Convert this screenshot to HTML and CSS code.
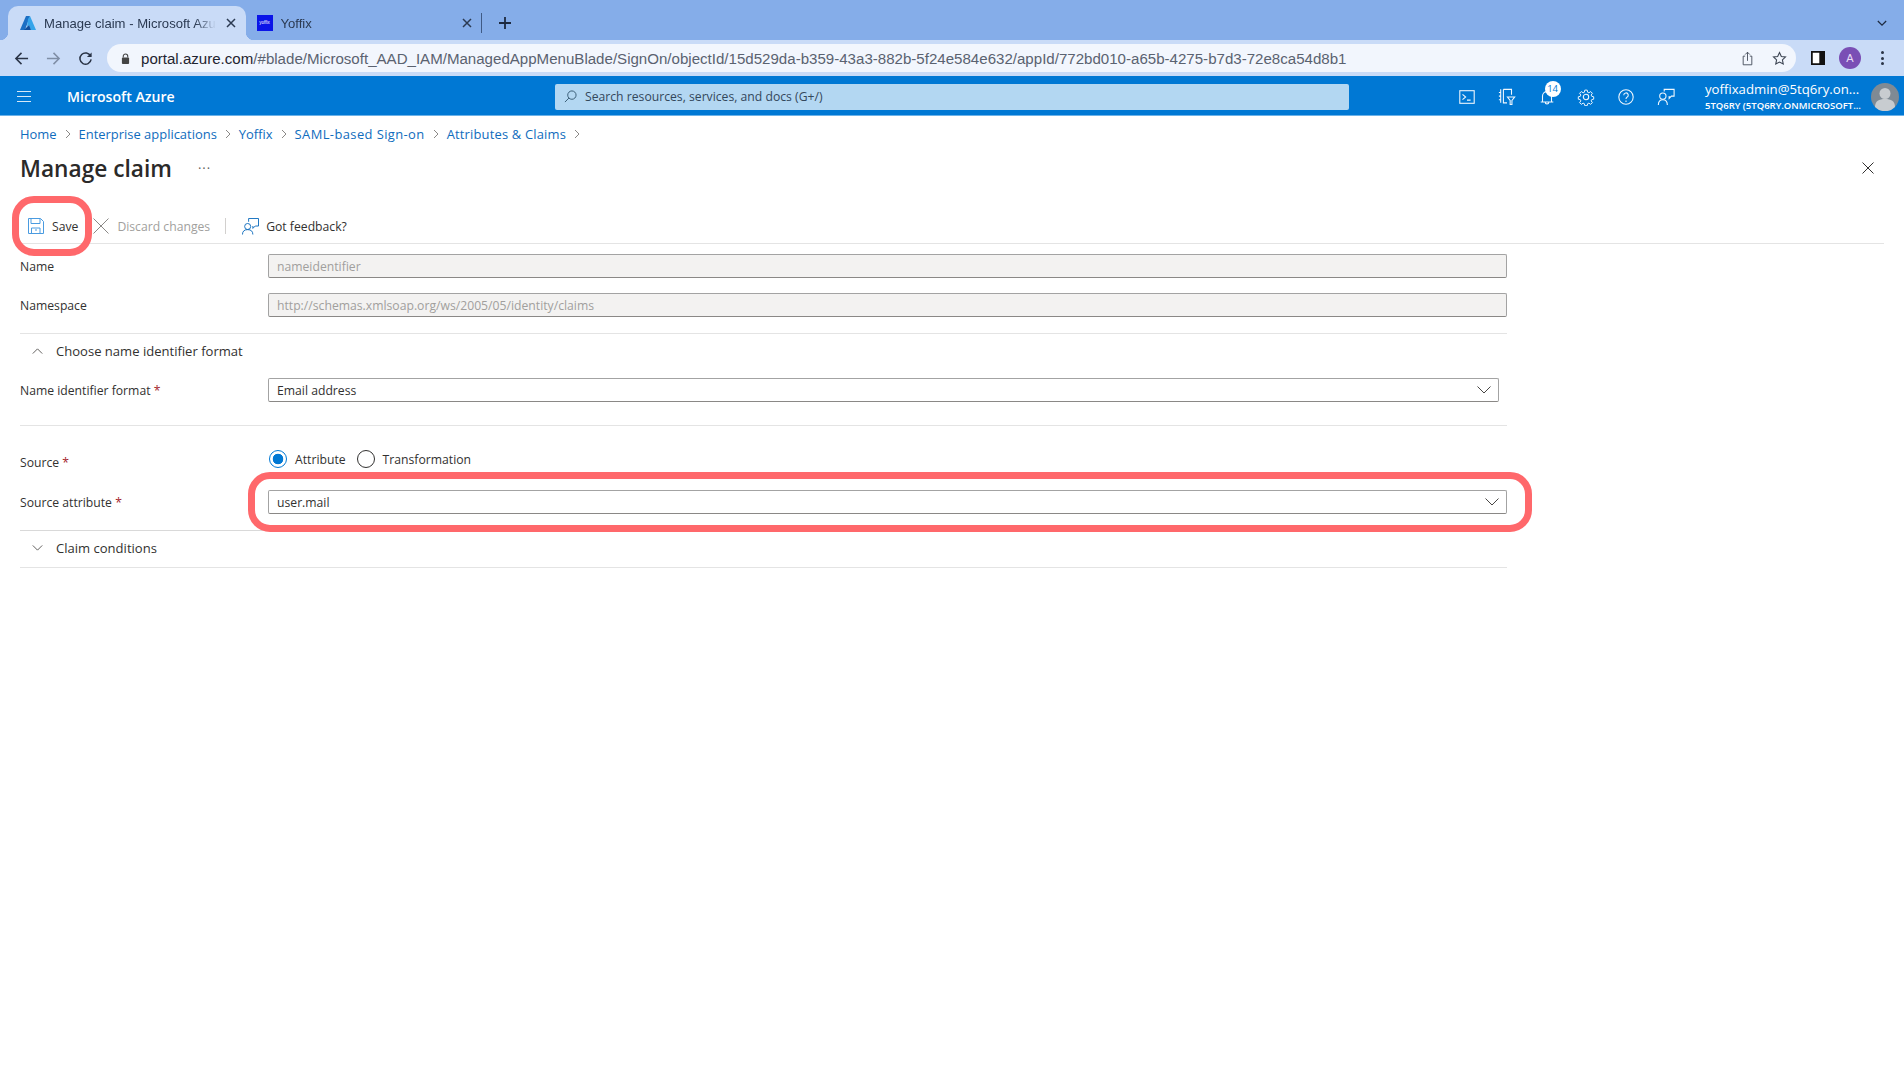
FILE: index.html
```html
<!DOCTYPE html>
<html lang="en">
<head>
<meta charset="utf-8">
<title>Manage claim - Microsoft Azure</title>
<link rel="stylesheet" href="styles.css">
</head>
<body>
<div class="tabstrip">
  <div class="tab tab-active">
    <svg class="favicon" viewBox="0 0 16 16"><path d="M6 1h4L5 15H0z" fill="#1c6fc4"/><path d="M10 1l6 14h-5L8.500 10 7 12l1-8z" fill="#35a4ea"/><path d="M4 15l5-5 2 5z" fill="#0f4f9e"/></svg>
    <span class="tab-title">Manage claim - Microsoft Azure</span>
    <svg class="tab-x" viewBox="0 0 10 10"><path d="M1 1l8 8M9 1l-8 8"/></svg>
  </div>
  <div class="tab tab-second">
    <span class="yoffix">yoffix</span>
    <span class="tab-title">Yoffix</span>
    <svg class="tab-x" viewBox="0 0 10 10"><path d="M1 1l8 8M9 1l-8 8"/></svg>
  </div>
  <span class="tab-sep"></span>
  <svg class="tab-plus" viewBox="0 0 12 12"><path d="M6 0v12M0 6h12"/></svg>
  <svg class="tab-menu" viewBox="0 0 12 8"><path d="M1 1l5 5 5-5"/></svg>
</div>
<div class="toolbar">
  <svg class="tb-ic" viewBox="0 0 16 16"><path d="M15 8H2M8 2L2 8l6 6"/></svg>
  <svg class="tb-ic tb-dim" viewBox="0 0 16 16"><path d="M1 8h13M8 2l6 6-6 6"/></svg>
  <svg class="tb-ic" viewBox="0 0 16 16"><path d="M13.500 5.500A6 6 0 1 0 14 9"/><path class="tb-fill" d="M14.500 1.500v5h-5z"/></svg>
  <div class="omnibox">
    <svg class="lock" viewBox="0 0 10 12"><path d="M2.500 5V3.500a2.500 2.500 0 0 1 5 0V5" fill="none" stroke="#444" stroke-width="1.200"/><rect x="1" y="5" width="8" height="7" rx="1" fill="#444"/></svg>
    <span class="url"><b>portal.azure.com</b>/#blade/Microsoft_AAD_IAM/ManagedAppMenuBlade/SignOn/objectId/15d529da-b359-43a3-882b-5f24e584e632/appId/772bd010-a65b-4275-b7d3-72e8ca54d8b1</span>
    <svg class="omni-ic share" viewBox="0 0 14 18"><path d="M4 6H1.500v11h11V6H10M7 12V1M4 4l3-3 3 3"/></svg>
    <svg class="omni-ic star" viewBox="0 0 18 18"><path d="M9 1.800l2.200 4.700 5 .6-3.700 3.500 1 5.100L9 13.200l-4.500 2.500 1-5.100L1.800 7.100l5-.6z"/></svg>
  </div>
  <svg class="panel" viewBox="0 0 16 16"><path d="M1 1h14v14H1z" fill="#fff" stroke="#111" stroke-width="2"/><path d="M9.500 1H15v14H9.500z" fill="#111"/></svg>
  <span class="profile">A</span>
  <span class="kebab"><i></i><i></i><i></i></span>
</div>
<header class="nav">
  <svg class="burger" viewBox="0 0 14 11"><path d="M0 .5h14M0 5.500h14M0 10.500h14"/></svg>
  <span class="brand">Microsoft Azure</span>
  <div class="search">
    <svg class="search-ic" viewBox="0 0 14 14"><circle cx="8.500" cy="5.500" r="4.500"/><path d="M5.300 8.700L1 13"/></svg>
    <span>Search resources, services, and docs (G+/)</span>
  </div>
  <div class="nav-icons">
    <svg class="nav-ic" viewBox="0 0 20 20"><rect x="2" y="3" width="16" height="14"/><path d="M5 7l3.500 3L5 13M10 13.500h4"/></svg>
    <svg class="nav-ic" viewBox="0 0 20 20"><path d="M3 1.500v15M6 1.500h9v6M6 1.500v15h4M1 5h2M1 9h2M1 13h2M10.500 10h8l-3 3.800v4.500h-2v-4.500z"/></svg>
    <span class="bell-wrap">
      <svg class="nav-ic" viewBox="0 0 20 20"><path d="M3 15.500h14M5 15.500V9a5 5 0 0 1 10 0v6.500M8 15.500c0 3 4 3 4 0"/></svg>
      <span class="badge">14</span>
    </span>
    <svg class="nav-ic" viewBox="0 0 20 20"><circle cx="10" cy="10" r="3"/><path d="M8.500 1.500h3l.5 2.600 1.600.7 2.200-1.500 2.100 2.100-1.500 2.200.7 1.600 2.400.5v3l-2.400.5-.7 1.600 1.500 2.200-2.100 2.100-2.200-1.500-1.600.7-.5 2.400h-3l-.5-2.400-1.600-.7-2.200 1.500-2.100-2.100 1.500-2.200-.7-1.600-2.400-.5v-3l2.400-.5.700-1.600-1.500-2.200 2.100-2.100 2.200 1.500 1.600-.7z" transform="translate(1 1) scale(.9)"/></svg>
    <svg class="nav-ic" viewBox="0 0 20 20"><circle cx="10" cy="10" r="8"/><path d="M7.500 8a2.500 2.500 0 1 1 3.600 2.200c-.8.500-1.100 1-1.100 2"/><path d="M10 14v1.500"/></svg>
    <svg class="nav-ic" viewBox="0 0 20 20"><path d="M8 4V1.500h11V9h-3l-2.500 2.500V9M1.500 19c0-4 2-6 5-6s5 2 5 6"/><circle cx="6.500" cy="9" r="3.500"/></svg>
  </div>
  <div class="account">
    <span class="acc-name">yoffixadmin@5tq6ry.on...</span>
    <span class="acc-org">5TQ6RY (5TQ6RY.ONMICROSOFT...</span>
  </div>
  <svg class="avatar" viewBox="0 0 28 28"><circle cx="14" cy="14" r="14" fill="#7f8a94"/><circle cx="14" cy="10.500" r="5.500" fill="#c8ccd0"/><path d="M4 24c0-6 4-8 10-8s10 2 10 8a14 14 0 0 1-20 0z" fill="#c8ccd0"/></svg>
</header>
<main class="page">
  <nav class="crumbs">
    <a>Home</a><svg viewBox="0 0 6 10"><path d="M1 1l4 4-4 4"/></svg>
    <a>Enterprise applications</a><svg viewBox="0 0 6 10"><path d="M1 1l4 4-4 4"/></svg>
    <a>Yoffix</a><svg viewBox="0 0 6 10"><path d="M1 1l4 4-4 4"/></svg>
    <a class="crumb-saml">SAML-based Sign-on</a><svg viewBox="0 0 6 10"><path d="M1 1l4 4-4 4"/></svg>
    <a class="crumb-attr">Attributes &amp; Claims</a><svg viewBox="0 0 6 10"><path d="M1 1l4 4-4 4"/></svg>
  </nav>
  <div class="titlebar">
    <h1>Manage claim</h1>
    <span class="more">···</span>
    <svg class="close" viewBox="0 0 12 12"><path d="M.5.500l11 11M11.500.500l-11 11"/></svg>
  </div>
  <div class="cmdbar">
    <button class="cmd cmd-save">
      <svg class="cmd-ic" viewBox="0 0 16 16"><path d="M.5.500h12l3 3v12H.5z" fill="none" stroke="#4a9be0"/><path d="M3 .5v5h9v-5M3.500 15.500V10h8.500v5.500M7 12h2" fill="none" stroke="#4a9be0"/></svg>
      <span>Save</span>
    </button>
    <button class="cmd cmd-off">
      <svg class="cmd-x" viewBox="0 0 16 16"><path d="M.5.500l15 15M15.500.500l-15 15"/></svg>
      <span>Discard changes</span>
    </button>
    <span class="cmd-sep"></span>
    <button class="cmd cmd-fb">
      <svg class="cmd-ic" viewBox="0 0 18 18"><path d="M7 4V.5h10.500v8H14l-2.500 2.500V8.500" fill="none" stroke="#0f6cbd"/><circle cx="6" cy="9" r="3.200" fill="none" stroke="#0f6cbd"/><path d="M.5 17.500c0-3.500 2-5.200 5.500-5.200s5.500 1.700 5.500 5.200" fill="none" stroke="#0f6cbd"/></svg>
      <span>Got feedback?</span>
    </button>
  </div>
  <form class="form">
    <div class="row">
      <label>Name</label>
      <div class="input input-off">nameidentifier</div>
    </div>
    <div class="row row-ns">
      <label>Namespace</label>
      <div class="input input-off">http://schemas.xmlsoap.org/ws/2005/05/identity/claims</div>
    </div>
    <div class="section section-first">
      <svg class="sec-chev" viewBox="0 0 12 7"><path d="M.5 6.500L6 1l5.500 5.500"/></svg>
      <span>Choose name identifier format</span>
    </div>
    <div class="row row-fmt">
      <label>Name identifier format <em>*</em></label>
      <div class="input input-short">Email address
        <svg class="sel-chev" viewBox="0 0 14 8"><path d="M.5.500L7 7 13.500.500"/></svg>
      </div>
    </div>
    <div class="row row-src">
      <label>Source <em>*</em></label>
      <div class="radios">
        <span class="radio radio-on"></span><span class="radio-l">Attribute</span>
        <span class="radio"></span><span class="radio-l">Transformation</span>
      </div>
    </div>
    <div class="row row-attr">
      <label>Source attribute <em>*</em></label>
      <div class="input">user.mail
        <svg class="sel-chev" viewBox="0 0 14 8"><path d="M.5.500L7 7 13.500.500"/></svg>
      </div>
    </div>
    <div class="section section-last">
      <svg class="sec-chev" viewBox="0 0 12 7"><path d="M.5.500L6 6l5.500-5.500"/></svg>
      <span>Claim conditions</span>
    </div>
  </form>
  <span class="mark mark-save"></span>
  <span class="mark mark-attr"></span>
</main>
</body>
</html>
```
FILE: styles.css
```css
* { box-sizing: border-box; }
html, body { margin: 0; height: 100%; background: #fff; overflow: hidden; }
body { font-family: "Open Sans", "Noto Sans", sans-serif; color: #323130; }
button { font: inherit; background: none; border: 0; padding: 0; color: inherit; }

/* Browser tab strip */
.tabstrip { display: flex; align-items: flex-end; height: 40px; padding-left: 8px; background: #85ade9; font: 13.100px "Liberation Sans", sans-serif; color: #2b3a52; }
.tab { display: flex; align-items: center; width: 238px; height: 34px; padding: 0 0 0 12px; border-radius: 10px 10px 0 0; position: relative; }
.tab-active { background: #c9dbf7; }
.tab-active::before, .tab-active::after { content: ""; position: absolute; bottom: 0; width: 8px; height: 8px; }
.tab-active::before { left: -8px; background: radial-gradient(circle at 0 0, transparent 8px, #c9dbf7 8.500px); }
.tab-active::after { right: -8px; background: radial-gradient(circle at 100% 0, transparent 8px, #c9dbf7 8.500px); }
.tab-second { margin-left: -1.500px; }
.favicon { width: 16px; height: 16px; flex: none; margin-right: 8px; }
.yoffix { flex: none; width: 16px; height: 16px; margin-right: 8px; background: #0a14e8; color: #fff; font-size: 4.500px; line-height: 16px; text-align: center; }
.tab-title { width: 172px; flex: none; white-space: nowrap; overflow: hidden; -webkit-mask-image: linear-gradient(90deg, #000 88%, transparent); mask-image: linear-gradient(90deg, #000 88%, transparent); }
.tab-x { width: 10px; height: 10px; flex: none; margin-left: 10px; fill: none; stroke: #2b3a52; stroke-width: 1.500; }
.tab-second .tab-x { margin-left: 9px; }
.tab-sep { width: 1px; height: 20px; margin: 0 0 7px -2px; background: #3f5a85; }
.tab-plus { width: 12px; height: 12px; margin: 0 0 11px 17px; fill: none; stroke: #1d2a40; stroke-width: 1.800; }
.tab-menu { width: 10px; height: 7px; margin: 0 17px 13px auto; fill: none; stroke: #1d2a40; stroke-width: 1.500; }

/* Browser toolbar */
.toolbar { display: flex; align-items: center; height: 36px; padding: 0 0 0 14px; background: #c9dbf7; }
.tb-ic { width: 15px; height: 15px; flex: none; margin-right: 17px; fill: none; stroke: #2a3446; stroke-width: 1.600; }
.tb-dim { stroke: #7f8ea6; }
.tb-fill { fill: #2a3446; stroke: none; }
.omnibox { display: flex; align-items: center; width: 1689px; height: 28px; margin-left: -3px; padding-left: 14px; border-radius: 14px; background: #f2f6fd; font: 15.080px "Liberation Sans", sans-serif; color: #5a6270; }
.omnibox b { font-weight: 400; color: #1f2430; }
.lock { width: 9px; height: 11px; flex: none; margin-right: 11px; }
.url { flex: 1; white-space: nowrap; }
.omni-ic { flex: none; fill: none; stroke: #3c4452; stroke-width: 1.100; }
.share { width: 11px; height: 15px; margin-right: 19px; }
.star { width: 15px; height: 15px; margin-right: 9px; stroke-width: 1.300; }
.panel { width: 14px; height: 14px; flex: none; margin-left: 15px; }
.profile { display: flex; align-items: center; justify-content: center; width: 22px; height: 22px; flex: none; margin-left: 14px; border-radius: 50%; background: #7a4fb5; color: #e8dcf5; font: 11px "Liberation Sans", sans-serif; }
.kebab { display: flex; flex-direction: column; gap: 2.500px; margin-left: 20px; }
.kebab i { width: 3px; height: 3px; border-radius: 50%; background: #2a3446; }

/* Portal header */
.nav { display: flex; align-items: center; height: 40px; padding: 2px 0 0 17px; background: #0078d4; border-bottom: 1px solid #6cb2e8; color: #fff; }
.burger { width: 14px; height: 11px; flex: none; fill: none; stroke: #d5e9f8; stroke-width: 1; }
.brand { width: 488px; margin-left: 36px; flex: none; font-size: 14.100px; font-weight: 600; white-space: nowrap; }
.search { display: flex; align-items: center; width: 794px; height: 26px; flex: none; padding-left: 9px; border-radius: 2px; background: #b3d7f2; font-size: 12.200px; color: #33475b; }
.search-ic { width: 13px; height: 13px; margin-right: 8px; fill: none; stroke: #33566f; stroke-width: 1; }
.nav-icons { display: flex; align-items: center; gap: 21.800px; margin-left: 109px; }
.nav-ic { width: 18px; height: 18px; flex: none; display: block; fill: none; stroke: #f0f7fd; stroke-width: 1.200; }
.bell-wrap { position: relative; display: block; }
.badge { position: absolute; top: -7px; left: 7px; width: 16px; height: 16px; border-radius: 50%; background: #fff; color: #0078d4; font-size: 9.500px; line-height: 16px; text-align: center; }
.account { display: flex; flex-direction: column; width: 166px; margin-left: 30px; flex: none; white-space: nowrap; }
.acc-name { font-size: 13.200px; line-height: 17px; }
.acc-org { font-size: 9.500px; font-weight: 600; line-height: 13px; margin-top: 1px; }
.avatar { width: 28px; height: 28px; flex: none; margin-left: 0; }

/* Page */
.page { position: relative; padding: 0 20px; }
.crumbs { display: flex; align-items: center; height: 36px; margin-bottom: 1px; font-size: 12.950px; color: #0f6cbd; white-space: nowrap; }
.crumbs svg { width: 6px; height: 10px; flex: none; margin: 0 8px; fill: none; stroke: #8a8886; stroke-width: 1; }
.crumb-saml { letter-spacing: .4px; }
.crumb-attr { letter-spacing: .18px; }
.titlebar { display: flex; align-items: center; height: 30px; }
h1 { margin: 0; font-size: 22.700px; font-weight: 600; color: #2b2a29; white-space: nowrap; }
.more { margin-left: 26px; font-size: 13px; letter-spacing: 1px; color: #605e5c; }
.close { width: 12px; height: 12px; margin-left: auto; margin-right: 10px; fill: none; stroke: #323130; stroke-width: 1; }

.cmdbar { display: flex; align-items: center; height: 61px; padding-top: 26px; border-bottom: 1px solid #e4e4e4; font-size: 12.200px; }
.cmd { display: flex; align-items: center; white-space: nowrap; color: #323130; }
.cmd-save { margin-left: 8px; }
.cmd-save .cmd-ic { width: 16px; height: 16px; margin-right: 8px; }
.cmd-off { margin-left: 15px; color: #a19f9d; }
.cmd-x { width: 16px; height: 16px; margin-right: 8px; fill: none; stroke: #8a8886; stroke-width: 1; }
.cmd-sep { width: 1px; height: 16px; margin-left: 15px; background: #d2d0ce; }
.cmd-fb { margin-left: 16px; }
.cmd-fb .cmd-ic { width: 17px; height: 17px; margin-right: 7px; }

.form { width: 1487px; padding-top: 10px; font-size: 12.200px; }
.row { display: flex; align-items: center; }
.row label { width: 248px; flex: none; color: #323130; white-space: nowrap; }
.row em { font-style: normal; color: #a4262c; }
.input { position: relative; display: flex; align-items: center; flex: 1; height: 24px; padding-left: 8px; border: 1px solid #a3a3a3; border-radius: 2px; border-bottom-color: #8a8886; background: #fff; color: #323130; white-space: nowrap; }
.input-off { background: #f3f2f1; color: #a19f9d; }
.input-short { flex: none; width: 1231px; }
.row-ns { margin-top: 15px; padding-bottom: 16px; border-bottom: 1px solid #e4e4e4; }
.section { display: flex; align-items: center; padding-left: 12px; font-size: 13.060px; color: #323130; }
.section-first { height: 34px; }
.sec-chev { width: 11px; height: 6px; flex: none; margin-right: 13px; fill: none; stroke: #484644; stroke-width: 1; }
.sel-chev { position: absolute; right: 7px; top: 7px; width: 14px; height: 8px; fill: none; stroke: #484644; stroke-width: 1; }
.row-fmt { margin-top: 10px; padding-bottom: 23px; border-bottom: 1px solid #e4e4e4; }
.row-src { margin-top: 21px; align-items: flex-start; height: 24px; }
.row-src label { padding-top: 7px; }
.radios { display: flex; align-items: center; height: 24px; }
.radio { width: 18px; height: 18px; flex: none; margin-left: 1px; border: 1px solid #323130; border-radius: 50%; background: #fff; }
.radio-on { border-color: #0078d4; background: radial-gradient(circle, #0078d4 0 5px, #fff 5.600px); }
.radio-l { margin-left: 8px; margin-right: 10px; }
.row-attr { margin-top: 19px; padding-bottom: 16px; border-bottom: 1px solid #d9d9d9; }
.section-last { height: 37px; padding-bottom: 2px; border-bottom: 1px solid #e4e4e4; }

/* Red highlights drawn over the screenshot */
.mark { position: absolute; border: 7.500px solid #ff686b; pointer-events: none; }
.mark-save { left: 12px; top: 80px; width: 80px; height: 60px; border-radius: 22px; }
.mark-attr { left: 248px; top: 356px; width: 1284px; height: 60px; border-radius: 22px; }
```
